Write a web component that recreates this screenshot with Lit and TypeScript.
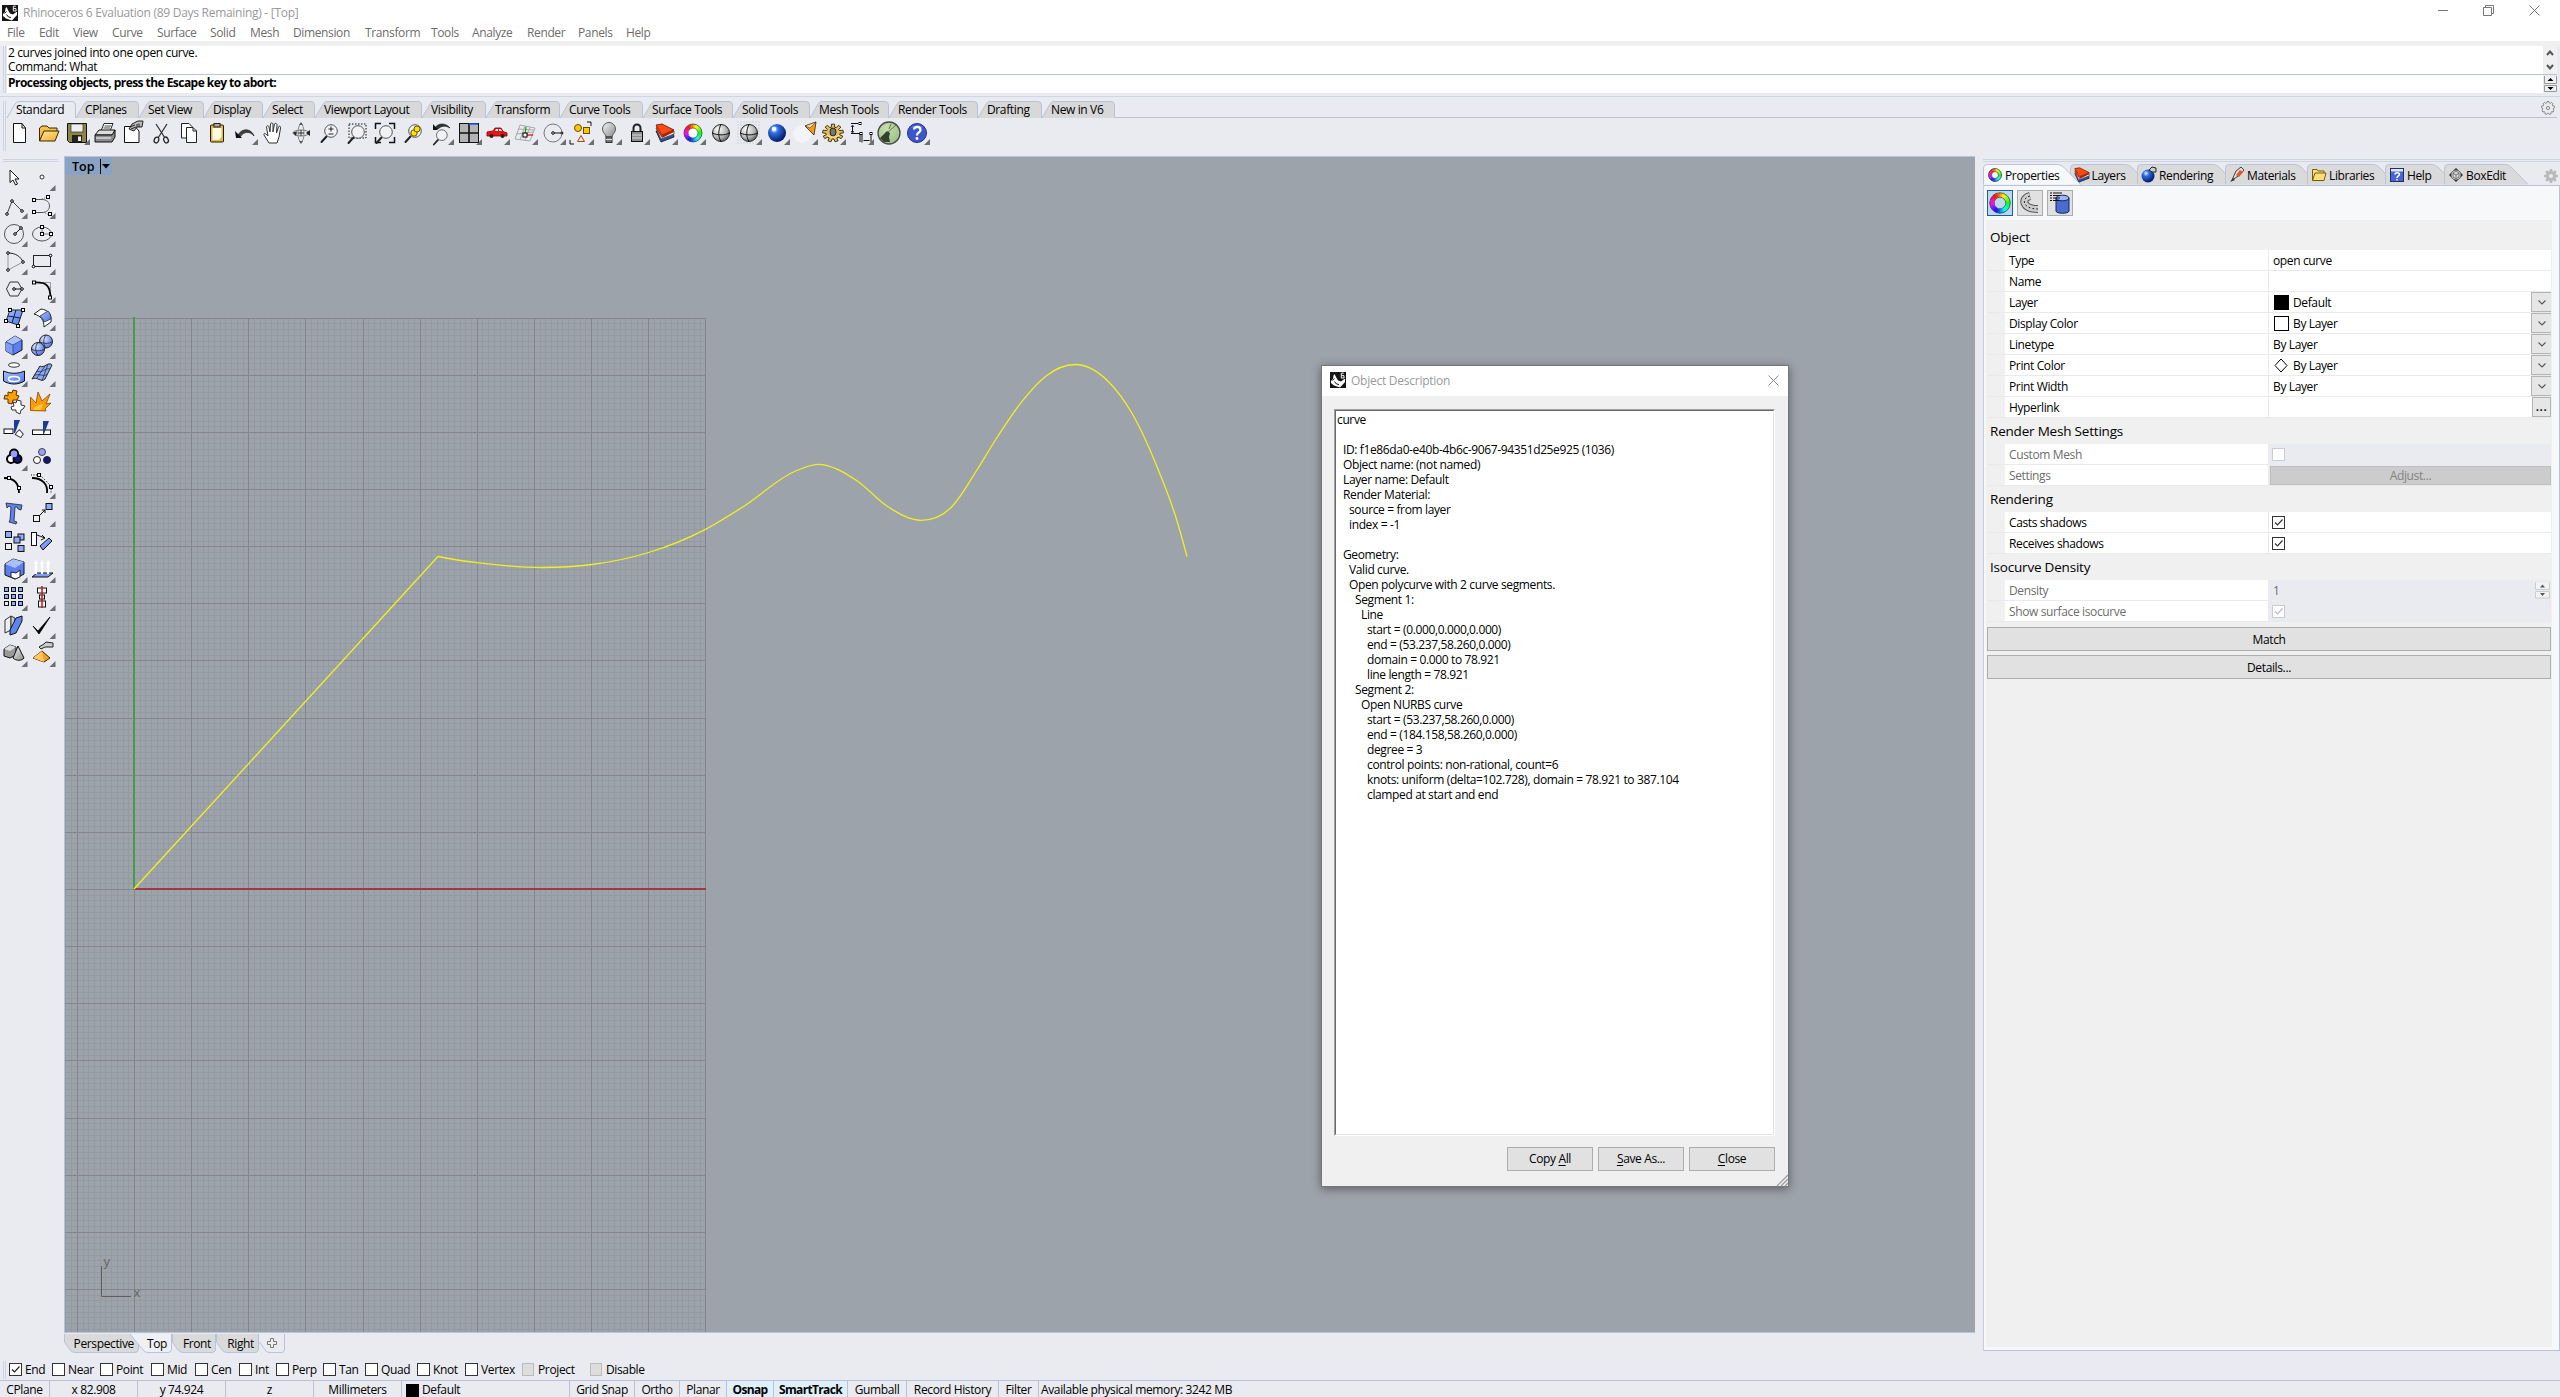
import { LitElement, html, svg, css, nothing } from "lit";
import { customElement, property } from "lit/decorators.js";

/* ---------- shared pieces ---------- */

const base = css`
  :host, :host * { box-sizing: border-box; }
  :host {
    font-family: "Open Sans", "Noto Sans", sans-serif;
    font-size: 12px;
    letter-spacing: -0.37px;
    color: #000;
    white-space: nowrap;
    cursor: default;
  }
  svg { display: block; overflow: visible; flex: none; }
`;

const polar = (r: number, deg: number) => {
  const a = (deg * Math.PI) / 180;
  return `${(r * Math.sin(a)).toFixed(2)} ${(-r * Math.cos(a)).toFixed(2)}`;
};

/** Hue ring centred on the origin. */
const wheel = (r: number, thick: number) => svg`
  ${Array.from({ length: 24 }, (_, i) => svg`<path d="M${polar(r, i * 15 - 1)}A${r} ${r} 0 0 1 ${polar(r, i * 15 + 16)}"
    fill="none" stroke="hsl(${(i * 15 + 40) % 360},100%,52%)" stroke-width=${thick}/>`)}
  <circle r=${r + thick / 2} fill="none" stroke="#444" stroke-width=".8"/>
  <circle r=${r - thick / 2} fill="none" stroke="#555" stroke-width=".8"/>`;

const gearPath = (n: number, ro: number, ri: number) => {
  let d = "";
  for (let i = 0; i < n; i++) {
    const a = (360 / n) * i, s = 360 / n;
    d += `${i ? "L" : "M"}${polar(ri, a - s * 0.34)}L${polar(ro, a - s * 0.22)}L${polar(ro, a + s * 0.22)}L${polar(ri, a + s * 0.34)}`;
  }
  return d + "z";
};

const defs = svg`<defs>
  <linearGradient id="blue" x1="0" y1="0" x2="1" y2="1"><stop offset="0" stop-color="#a9c2ff"/><stop offset="1" stop-color="#4a72ee"/></linearGradient>
  <linearGradient id="gold" x1="0" y1="0" x2="1" y2="1"><stop offset="0" stop-color="#ffe9a0"/><stop offset="1" stop-color="#f0ac20"/></linearGradient>
  <linearGradient id="grey" x1="0" y1="0" x2="1" y2="1"><stop offset="0" stop-color="#f4f4f4"/><stop offset="1" stop-color="#8a8a8a"/></linearGradient>
  <radialGradient id="ball" cx=".35" cy=".3" r=".8"><stop offset="0" stop-color="#fff"/><stop offset=".6" stop-color="#b4b4b4"/><stop offset="1" stop-color="#4c4c4c"/></radialGradient>
  <radialGradient id="bball" cx=".35" cy=".3" r=".75"><stop offset="0" stop-color="#e8f4ff"/><stop offset=".3" stop-color="#2f6fe0"/><stop offset="1" stop-color="#00105c"/></radialGradient>
  <radialGradient id="lball" cx=".35" cy=".3" r=".8"><stop offset="0" stop-color="#dfe8ff"/><stop offset="1" stop-color="#3e68e6"/></radialGradient>
  <radialGradient id="green" cx=".4" cy=".3" r=".8"><stop offset="0" stop-color="#c6e0ae"/><stop offset="1" stop-color="#96bd80"/></radialGradient>
</defs>`;

const sq = (x: number, y: number, s = 3) => svg`<rect x=${x - s / 2} y=${y - s / 2} width=${s} height=${s} fill="#fff" stroke="#000"/>`;
const dot = (x: number, y: number, r = 1.3) => svg`<circle cx=${x} cy=${y} r=${r} fill="#fff" stroke="#000"/>`;
const lens = (dx = 0, dy = 0) => svg`<g transform="translate(${dx} ${dy})">
  <path d="M-3.5 4.500L-8.500 10" stroke="#222" stroke-width="2" stroke-linecap="round"/>
  <circle cx="1" cy="-1" r="6.300" fill="#f4f4f6" fill-opacity=".8" stroke="#555"/></g>`;

const logo = svg`<rect width="16" height="16" fill="#161616"/>
  <path d="M1 9L3 7L3.5 3.5L4.5 2L6.5 6L8 8.5L11 9.5L15 6.5V10L10 15.5L4 13.5L1 11z" fill="#fff"/>
  <path d="M4.5 9.5L6.5 12L9 12.5M2.5 8.5l2-2" stroke="#161616" fill="none"/>
  <path d="M13.8 1.2H11.3V6H14V3.6H11.3" stroke="#eee" fill="none"/>`;

/* ---------- icon drawings, all centred on the origin ---------- */

const art: Record<string, unknown> = {
  new: svg`<path d="M-7.5-9.5H1L4.5-5V9.5H-7.5z" fill="#fdfdfd" stroke="#111"/><path d="M1-9.5V-5H4.5" fill="none" stroke="#111"/>`,
  open: svg`<path d="M-9.5 8V-5L-7-7H-2L0-5H8V-1H-5z" fill="#f2c14a" stroke="#3c2800"/><path d="M-9.5 8L-5-2H10L6 8z" fill="url(#gold)" stroke="#3c2800"/>`,
  save: svg`<path d="M-9.5-9.5H9.5V9.5H-7.5L-9.5 7.5z" fill="#8c8646" stroke="#111"/><rect x="-6" y="-9" width="12" height="8" fill="#eee" stroke="#333" stroke-width=".7"/>
    <rect x="-5" y="2" width="10" height="7" fill="#222"/><rect x="1" y="3.5" width="3" height="4.5" fill="#eee"/>`,
  print: svg`<path d="M-4-2L-1-9.5H8L5-2" fill="#fff" stroke="#222"/><path d="M-.5-7H6M-1.5-5H5" stroke="#444"/><path d="M-10 2L-6-3H10L8 2z" fill="#ddd" stroke="#111"/>
    <path d="M-10 2H7L10-3V4L7 9H-10z" fill="#8c8c8c" stroke="#111"/><path d="M-9 5H6" stroke="#fff"/>`,
  props: svg`<path d="M-8.5-6.5H2L6-2V9.500H-8.5z" fill="#fdfdfd" stroke="#111"/><path d="M-4-4L-1-9L5-12H10L9-6L4-6L1-2z" fill="#bbb" stroke="#222"/><path d="M-3-6L2-8M-2-4L3-6M4-9V-6M6-9.500V-6" stroke="#222"/>`,
  cut: svg`<path d="M-5-9L4 5M6-9L-3 5" stroke="#333" stroke-width="1.3"/><ellipse cx="-4.500" cy="7" rx="2.200" ry="3" fill="none" stroke="#222" stroke-width="1.300" transform="rotate(25 -4.500 7)"/><ellipse cx="5" cy="7" rx="2.200" ry="3" fill="none" stroke="#222" stroke-width="1.300" transform="rotate(-25 5 7)"/>`,
  copy: svg`<path d="M-7.500-9.500H0L3-6.500V5H-7.500z" fill="#fdfdfd" stroke="#222"/><path d="M-2.500-5.500H4L7.500-2V9.500H-2.500z" fill="#fdfdfd" stroke="#222"/><path d="M4-5.500V-2H7.500" fill="none" stroke="#222"/>`,
  paste: svg`<rect x="-6.500" y="-8" width="13" height="17" rx="1" fill="#e5b93a" stroke="#221a00"/><path d="M-4.500-5H4.500V4L2 7H-4.500z" fill="#fffce0"/><rect x="-3" y="-9.500" width="6" height="3.500" fill="#aaa" stroke="#222"/>`,
  undo: svg`<path d="M-7 2C-3-5 6-5 9 3C5-2-1-2-5 4" fill="#444" stroke="#222" stroke-width=".8"/><path d="M-10-2L-9 5H-3z" fill="#111"/>`,
  hand: svg`<path d="M-4 10L-9 2C-9.500 0-8 0-6 2L-5 3L-6.500-6C-6-8-4.500-7.500-4-6L-3-1L-2.500-9C-2-10.500-.5-10.500 0-9V-1L1.500-9C2-10 3.500-10 4-8.500L3.500 0L5.500-6C6-7.500 8-7 7.500-5L6 4L4 10z" fill="#fff" stroke="#333"/>`,
  spin: svg`<ellipse rx="8" ry="3" fill="none" stroke="#777"/><ellipse rx="3" ry="9" fill="none" stroke="#888"/><path d="M-5 3l-3-3.500l4-1zM5 0l4-3v6z" fill="#222"/><path d="M0-11l2 3h-4zM0 11l2-3h-4z" fill="#555"/><path d="M-3 0H3M0-3V3" stroke="#333"/>`,
  zoomdyn: svg`${lens(1, -1)}<path d="M-.500-4H4.500M2-6.500V-1.500M-.500 1H4.500" stroke="#222"/>`,
  zoomwin: svg`<path d="M-8-9H9V5H-8z" fill="none" stroke="#111" stroke-dasharray="1.500 1.500"/>${lens(0, 0)}`,
  extents: svg`<path d="M-9.500-4V-9.500H-4M4-9.500H9.500V-4M9.500 4V9.500H4M-9.500 4V9.500H-4" fill="none" stroke="#111" stroke-width="1.500"/>${lens(0, 0)}`,
  zoomsel: svg`${lens(1, -1)}<circle cx="1" cy="0" r="3.200" fill="#ffe000" stroke="#665500"/><circle cx="4" cy="-4" r="3" fill="#ffe000" stroke="#665500"/>`,
  undoview: svg`<g transform="translate(0 3) scale(.85)">${lens(0, 0)}</g><path d="M-7-4C-3-11 5-10 9-5C4-8 0-7-3-4" fill="#333" stroke="#222" stroke-width=".7"/><path d="M-8-9V-3H-3z" fill="#111"/>`,
  views: svg`<rect x="-9.500" y="-9.500" width="19" height="19" fill="#b4b4b4" stroke="#111"/><path d="M0-9.500V9.500M-9.500 0H9.500" stroke="#111" stroke-width="1.600"/><path d="M0-9H9" stroke="#1b58ff" stroke-width="1.500"/>`,
  car: svg`<path d="M-10 3V-1L-4-2L-2-5H4L6-1.500L10 0V3z" fill="#ee1111" stroke="#7a0000" stroke-width=".8"/><path d="M-2-2L-1-4H1V-2zM2-4H3.500L5-2H2z" fill="#fff"/><circle cx="-5.500" cy="3" r="2" fill="#222"/><circle cx="5.500" cy="3" r="2" fill="#222"/>`,
  cplane: svg`<path d="M-10 6L-5-8L10-5L5 8zM-8.500 1L8-1M-7-4L9-3M-5 7L0-7M0 7L5-6" fill="none" stroke="#aaa"/><path d="M0 2H8" stroke="#d00" stroke-width="1.200"/><path d="M0 2L1-6" stroke="#0a0" stroke-width="1.200"/>${sq(0, 2, 4)}`,
  circ: svg`<circle r="9" fill="none" stroke="#777"/><path d="M0 0H8" stroke="#111"/>${dot(0, 0)}${dot(9, 0, 1)}`,
  select: svg`<path d="M6-11H10V-7M-11 7V11H-7" fill="none" stroke="#111"/><circle cx="-3" cy="-5" r="3.500" fill="#ffc800" stroke="#6a4c00"/><rect x="2.500" y="-5.500" width="6" height="6" fill="#ffc800" stroke="#6a4c00"/><path d="M0 2.500L3.500 8.500H-3.500z" fill="#ffe0d0" stroke="#a04a20"/>`,
  bulb: svg`<path d="M-3 4C-3 1-6.500 0-6.500-4A6.500 6.500 0 0 1 6.500-4C6.500 0 3 1 3 4z" fill="url(#grey)" stroke="#555"/><rect x="-3" y="4" width="6" height="5.500" fill="#777" stroke="#333"/><path d="M-3 6.500H3" stroke="#ddd"/>`,
  lock: svg`<path d="M-3.500-1V-5A3.500 3.500 0 0 1 3.500-5V-1" fill="none" stroke="#222" stroke-width="2"/><rect x="-5.500" y="-1.500" width="11" height="10" fill="#8e8e8e" stroke="#111"/><path d="M-5 2H5M-5 5H5" stroke="#ddd"/>`,
  layers: svg`<path d="M-9-2L-4 9L9 4L8-2z" fill="#2a50b8" stroke="#111" stroke-width=".8"/><path d="M-9-5L-4 6L9 1V-2z" fill="#fff" stroke="#444" stroke-width=".8"/><path d="M-9-8L-3 2L9-3L-3-9z" fill="#ff4a12" stroke="#551100" stroke-width=".8"/><path d="M-9-8V-4L-3 5V2z" fill="#c83408"/><path d="M-3 2L9-3V-1L-3 5z" fill="#a82400"/>`,
  color: svg`<circle r="6" fill="#fff"/>${wheel(7, 4)}`,
  ball: svg`<circle r="8.500" fill="url(#ball)" stroke="#222"/><path d="M-8.500 0C-4 2.500 4 2.500 8.500 0M0-8.500C-3-3-3 4 0 8.500" fill="none" stroke="#111"/>`,
  ball2: svg`<path d="M-11.500-11H12M-11.500-8H12M-11.500-5H12M-11.500-2H12M-11.500 1H12M-11.500 4H12M-11.500 7H12M-11.500 10H12" stroke="#bbb" stroke-dasharray="1 2"/><circle r="8.500" fill="url(#ball)" stroke="#222"/><path d="M-8.500 0C-4 2.500 4 2.500 8.500 0M0-8.500C-3-3-3 4 0 8.500" fill="none" stroke="#111"/>`,
  bball: svg`<circle r="9" fill="url(#bball)"/><circle cx="-3" cy="-4" r="2.200" fill="#fff" opacity=".9"/>`,
  cone: svg`<circle cx="-3" cy="1" r="9" fill="#fff" opacity=".45"/><path d="M0-7L11-11L9 2z" fill="#ff9a10" stroke="#222" stroke-width=".8"/><path d="M0-7L11-11L5-5z" fill="#ffe0a0" stroke="#222" stroke-width=".5"/>`,
  gear: svg`<path d=${gearPath(9, 10.5, 7)} fill="#e7bd5c" stroke="#33260a" transform="scale(1 .85)"/><ellipse rx="3" ry="4" cy="-1" fill="#777" stroke="#222"/><path d="M-6 2C-3 5 3 5 6 2" stroke="#fff4c0" fill="none"/>`,
  dim: svg`<path d="M-10-9.500H-3M-8.500-7V-1M-10 .500H-1V9M1 1.500V9.500M10 2V9.500M2.500 7.500H8.500" fill="none" stroke="#111"/><path d="M-10-6l1.500-2l1.500 2M-10-2l1.500 2l1.500-2" fill="none" stroke="#111" stroke-width=".8"/>${sq(-1, -9.500, 2)}${sq(0, .500, 2)}${sq(10, .500, 2)}`,
  green: svg`<circle r="11" fill="url(#green)" stroke="#4a4a4a" stroke-width="1.300"/><path d="M-9 5L-4 0L-2-2L1 0L0 4L1 9L-5 9z" fill="#33402c"/><path d="M-2 0L8-9M0-4L2-9" stroke="#4a5a40" stroke-width=".8"/>`,
  help: svg`<circle r="9.500" fill="#3c56cc" stroke="#23307c"/><path d="M-6-6A9 6 0 0 1 6-6A9 7 0 0 1-6-6" fill="#8fa4f0" opacity=".6"/><path d="M-3-3.500C-3-7 3.500-7 3.500-3C3.500-.500 0-.500 0 2.500" fill="none" stroke="#fff" stroke-width="2.200"/><circle cy="5.500" r="1.400" fill="#fff"/>`,

  pointer: svg`<path d="M-4-7V5.500L-1 3L1.500 8L3.500 7L1 2H5z" fill="#fff" stroke="#111"/>`,
  point: svg`<circle r="2" fill="#fff" stroke="#333"/>`,
  pline: svg`<path d="M-7 9L-2-4L8 6" fill="none" stroke="#444"/>${dot(-7, 9)}${dot(-2, -4)}${dot(8, 6)}`,
  curve: svg`<path d="M-8-5H0C10-5 10 8 0 8H-8" fill="none" stroke="#555" transform="translate(0 -.500)"/><path d="M0-6L6-8M3 8L8 10" stroke="#777" stroke-dasharray="1 1"/>${sq(-8, -5)}${sq(6, -8)}${sq(-8, 7)}${sq(8, 9)}`,
  circle: svg`<circle r="9.500" cy="1" fill="none" stroke="#555"/><path d="M1 1L7-5" stroke="#111"/>${dot(1, 1)}${dot(7, -5)}`,
  ellipse: svg`<ellipse rx="9.500" ry="7" cy="1" fill="none" stroke="#555"/><path d="M0 1V-6M0 1H9" stroke="#777"/>${sq(0, -6)}${sq(0, 1)}${sq(9, 1)}`,
  arc: svg`<path d="M-6-8V9L9 1" fill="none" stroke="#999"/><path d="M-6-8C2-8 7-4 9 1" fill="none" stroke="#222"/>${dot(-6, -8)}${dot(-6, 9)}${dot(9, 1)}`,
  rect: svg`<rect x="-8.500" y="-5.500" width="17" height="11" fill="none" stroke="#222"/>${dot(8.500, -5.500)}${dot(-8.500, 5.500)}`,
  polygon: svg`<path d="M-7.500 0L-4-7H4L8 0L4 7H-4z" fill="none" stroke="#333"/><path d="M0 0H8" stroke="#111"/>${dot(0, 0)}${dot(8, 0)}`,
  fillet: svg`<path d="M0-6.500H8.500V3" fill="none" stroke="#999"/><path d="M-8-6.500C4-7 8-4 8.500 8" fill="none" stroke="#000" stroke-width="1.800"/>${sq(-8, -6.500)}${sq(8, 8.500)}`,
  surfpts: svg`<path d="M-4-7H9L4 8L-8 4z" fill="url(#blue)" stroke="#222"/><path d="M-6-1L6 1M2-7L-2 6" stroke="#123"/>${sq(-4, -7)}${sq(9, -7)}${sq(-8, 4)}${sq(4, 9)}`,
  sweep: svg`<path d="M-8-3L-1-8C7-7 10-2 9 5L2 10C2 3-1-1-8-3z" fill="#fff" stroke="#222"/><path d="M-2-1L6-6C8-4 9-1 9 2L2 5C1 2 0 0-2-1z" fill="url(#blue)" stroke="#222" stroke-width=".7"/>`,
  box: svg`<path d="M-8-3L1-9L8-5V5L-1 10L-8 6z" fill="#5b80f2" stroke="#111"/><path d="M-8-3L1-9L8-5L-1 0z" fill="#a9c0ff"/><path d="M-8-3L-1 0V10L-8 6z" fill="#7f9df8"/><path d="M-8-3L-1 0L8-5M-1 0V10" fill="none" stroke="#2a3b80" stroke-width=".7"/>`,
  spheres: svg`<circle cx="4" cy="-3.500" r="6.500" fill="url(#lball)" stroke="#222"/><path d="M-2.500-3.500C1-1 7-1 10.500-3.500M4-10C1-6 1-1 4 3" fill="none" stroke="#222" stroke-width=".8"/><circle cx="-4" cy="4" r="6.500" fill="url(#lball)" stroke="#222"/><path d="M-10.500 4C-7 6.500-1 6.500 2.500 4M-4-2.500C-7 1-7 6-4 10.500" fill="none" stroke="#222" stroke-width=".8"/>`,
  project: svg`<ellipse cy="-8" rx="5.500" ry="2.200" fill="#fff" stroke="#333"/><path d="M-10.500-2C-4 1 4 1 10.500-2V8C4 12-4 12-10.500 8z" fill="url(#blue)" stroke="#111"/><ellipse cy="6" rx="5.500" ry="2.500" fill="none" stroke="#fff" stroke-width="1.600"/>`,
  mesh: svg`<path d="M-2-7C2-4 6-12 10-8L3 6C-1 10-5 3-10 6z" fill="#8ea8fa" stroke="#222"/><path d="M-5-2C0 1 4-6 8-4M-8 3C-3-1 1 5 5 1M3-7L-5 5M6-9L0 8" fill="none" stroke="#234" stroke-width=".8"/>`,
  join: svg`<path d="M-9-6l3 1l0-4l4 1l1-3l4 1l-1 4l3 1l-2 4l-4 0l-1 4l-4-1l0-4l-4 0z" fill="#ffa200" stroke="#5a3200"/><path d="M-1 1l3 1l1-3l4 1l0 4l4 1l-2 3l-2 1l-1 4l-4-2l0-2l-4 0l-1-3l3-1z" fill="#fff" stroke="#333"/>`,
  explode: svg`<path d="M-11.500 9.500V-4L-6 2L-4-9L0 0L8-7L4 3L9 2L3 8L4 10z" fill="#ff9c08" stroke="#8a4400" stroke-width=".8"/><path d="M-9 9L-6 5L1 3L-1 9z" fill="#ffc830"/>`,
  trim: svg`<rect x="-10" y="0" width="9" height="4.500" fill="#fff" stroke="#111"/><path d="M0-9H6L1 4H0z" fill="#1c3c96"/><path d="M3 3L6 1L9 6L6 9L1 5z" fill="#fff" stroke="#444" transform="rotate(-10 4 4)"/>`,
  split: svg`<rect x="-9.500" y="1" width="18" height="4.500" fill="#fff" stroke="#111"/><path d="M1-8H7L2 5H1z" fill="#1c3c96"/>`,
  group: svg`<circle cy="-3.500" r="4" fill="#98a0ff" stroke="#000" stroke-width="2"/><circle cx="-3" cy="2" r="4" fill="#fff" stroke="#000" stroke-width="2"/><circle cx="3.500" cy="2" r="4" fill="#14147c" stroke="#000" stroke-width="2"/><circle cy="-3" r="3.300" fill="#98a0ff"/>`,
  ungroup: svg`<circle cy="-5" r="3.500" fill="#98a0ff" stroke="#444"/><circle cx="-5" cy="3" r="3.500" fill="#fff" stroke="#222"/><circle cx="5" cy="3" r="3.500" fill="#14147c" stroke="#222"/>`,
  ptson: svg`<path d="M-10-7C0-7 5-2 5 8" fill="none" stroke="#000" stroke-width="1.800"/>${sq(-5, -7)}${sq(5, 3)}`,
  ptson2: svg`<path d="M-10-7C0-7 6-1 5 8" fill="none" stroke="#000" stroke-width="1.800"/><path d="M-11-10H-2L9 1V9" fill="none" stroke="#000" stroke-dasharray="1 1.500"/>${sq(-3, -10)}${sq(9, 2)}`,
  text: svg`<path d="M-8-10L8-8L7-3L4-4L3-6H1L0 8L3 9L2 11L-5 9L-4 7L-3-6L-5-7L-7-5z" fill="#5d83f5" stroke="#222" stroke-width=".8"/>`,
  scale: svg`<rect x="-8.500" y="2.500" width="6" height="6" fill="#eee" stroke="#111"/><rect x="4" y="-9.500" width="6" height="6" fill="#8fa9fb" stroke="#111"/><path d="M-2 2L3-3M0-3H3V0" fill="none" stroke="#111"/>`,
  array: svg`<g stroke="#111"><rect x="-8.500" y="-9.500" width="6" height="6" fill="#8fa9fb"/><rect x="4" y="-7" width="6" height="6" fill="#8fa9fb"/><rect x="0" y="-4" width="6" height="6" fill="#8fa9fb"/><rect x="-8.500" y="2.500" width="6" height="6" fill="#eee"/><rect x="4" y="4.500" width="6" height="6" fill="#8fa9fb"/></g>`,
  orient: svg`<rect x="-10.500" y="-8.500" width="5" height="13" fill="#fff" stroke="#111"/><path d="M-5-6L3-3M0-6L3-3L-1-1" fill="none" stroke="#111"/><path d="M-2 5L7-3L10 0L1 9z" fill="url(#blue)" stroke="#111"/>`,
  solid: svg`<path d="M-9-5L-1-10L10-7V5L1 10L-9 6z" fill="#5b80f2" stroke="#111"/><path d="M-9-5L-1-10L10-7L1-1z" fill="#a9c0ff"/><path d="M-3 3L2 4L6 1V8L1 10L-3 8z" fill="#fff" stroke="#222"/>`,
  extrude: svg`<path d="M-10 8L-5 4H11L6 8z" fill="#7f9df8" stroke="#111"/><path d="M-6 5V-5M0 5V-5M6 5V-5" stroke="#fff" stroke-width="2.200"/><path d="M-8.500-5L-6-9L-3.500-5zM-2.500-5L0-9L2.500-5zM3.500-5L6-9L8.500-5z" fill="#fff"/>`,
  grid: svg`${[0, 1, 2].map((r) => [0, 1, 2].map((c) => svg`<rect x=${c * 7 - 9.5} y=${r * 7 - 9.5} width="4" height="4" fill=${r === 2 && c === 0 ? "#eee" : "#8fa9fb"} stroke="#111"/>`))}`,
  align: svg`<rect x="-4.500" y="-9" width="9" height="5" fill="#fff" stroke="#111"/><rect x="-2.500" y="-2" width="5" height="4" fill="#fff" stroke="#111"/><rect x="-3.500" y="4" width="7" height="6" fill="#fff" stroke="#111"/><path d="M0-11V11" stroke="#d01818" stroke-width="1.800" opacity=".85"/>`,
  flow: svg`<path d="M-9-5L-3-9V5L-9 8z" fill="#eee" stroke="#333"/><path d="M-3-9L1-7L0 6L-3 8z" fill="#ccc" stroke="#333"/><path d="M2-7L8-9L8-4L2 8L-4 10L-4 5z" fill="#5f83f3" stroke="#111"/>`,
  check: svg`<path d="M-9 1L-4 6L8-8L-3 9z" fill="#000" stroke="#000" stroke-width=".8"/>`,
  shapes: svg`<path d="M-10-4L-4-8L2-6V2L-4 5L-10 3z" fill="#999" stroke="#111"/><path d="M-10-4L-4-8L2-6L-4-2z" fill="#ddd"/><path d="M4-7L10 5C8 8 2 8-1 5z" fill="url(#grey)" stroke="#111"/>`,
  render: svg`<path d="M0-2L8 5L2 9L-9 5z" fill="#f0a020" stroke="#3c2800"/><path d="M0-2L2 9L-9 5z" fill="#ffc860"/><path d="M-3-6L2-9L4-11L11-10V-6L3-6L-1-4z" fill="#ccc" stroke="#222"/>`,
};

const TOOLS: [string, boolean][] = [
  ["new", false], ["open", false], ["save", true], ["print", false], ["props", false], ["cut", false], ["copy", false], ["paste", false],
  ["undo", true], ["hand", false], ["spin", false], ["zoomdyn", false], ["zoomwin", false], ["extents", false], ["zoomsel", false],
  ["undoview", true], ["views", true], ["car", true], ["cplane", true], ["circ", true], ["select", true], ["bulb", true], ["lock", true],
  ["layers", true], ["color", true], ["ball", false], ["ball2", true], ["bball", true], ["cone", true], ["gear", true], ["dim", true],
  ["green", false], ["help", true],
];

const SIDE: [string, boolean][] = [
  ["pointer", false], ["point", true], ["pline", true], ["curve", true], ["circle", true], ["ellipse", true], ["arc", true], ["rect", true],
  ["polygon", true], ["fillet", true], ["surfpts", true], ["sweep", true], ["box", true], ["spheres", true], ["project", true], ["mesh", true],
  ["join", false], ["explode", false], ["trim", false], ["split", false], ["group", true], ["ungroup", false], ["ptson", false], ["ptson2", true],
  ["text", false], ["scale", true], ["array", false], ["orient", false], ["solid", true], ["extrude", true], ["grid", true], ["align", true],
  ["flow", true], ["check", true], ["shapes", true], ["render", true],
];

const tool = ([name, fly]: [string, boolean], dx: number, dy: number) => html`
  <svg width="28" height="28" viewBox="-14 -14 28 28">${defs}${art[name]}
    ${fly ? svg`<path d="M${13 + dx} ${6 + dy}v6h-6z" fill="#6e6e6e"/>` : nothing}</svg>`;

/* ---------- viewport ---------- */

const OX = 134, OY = 889, UNIT = 5.713;

const CURVE: [number, number][] = [
  [438, 556.5], [479, 562.9], [543, 567.5], [592, 564.5], [648.6, 552.5], [705.5, 529.3], [744.3, 506], [793.5, 472], [818, 464.3],
  [857.3, 481], [886.8, 506], [921.2, 520.3], [950.6, 508], [977.6, 469], [994.8, 441], [1021.8, 401.7], [1046.4, 375.7], [1075, 364.5],
  [1107.8, 381], [1132.4, 414], [1157, 466.7], [1176.6, 519.5], [1187, 556.5],
];

/** Cubic path through points whose x always grows; slopes come from neighbouring chords. */
function smooth(p: [number, number][]): string {
  const n = p.length;
  const h = (i: number) => p[i + 1][0] - p[i][0];
  const c = (i: number) => (p[i + 1][1] - p[i][1]) / h(i);
  const m = p.map((_, i) => {
    if (i === 0) return 1.5 * c(0) - 0.5 * c(1);
    if (i === n - 1) return 1.15 * c(n - 2) - 0.15 * c(n - 3);
    return (c(i - 1) * h(i) + c(i) * h(i - 1)) / (h(i - 1) + h(i));
  });
  [2, 8, 11, 17].forEach((i) => (m[i] = 0));
  let d = `M${p[0]}`;
  for (let i = 0; i < n - 1; i++) {
    const t = h(i) / 3;
    d += `C${p[i][0] + t} ${p[i][1] + m[i] * t} ${p[i + 1][0] - t} ${p[i + 1][1] - m[i + 1] * t} ${p[i + 1]}`;
  }
  return d;
}

@customElement("rh-viewport")
class Viewport extends LitElement {
  static styles = [base, css`
    :host { display: block; position: relative; overflow: hidden; background: #9da3aa; border: 1px solid #b9c2dc; border-right: 0; }
    .scene { position: absolute; left: -65px; top: -157px; }
    .label { display: flex; align-items: center; width: 47px; height: 18px; background: #8ba3c3; position: relative; font-weight: 600; font-size: 12.500px; padding-left: 7px; letter-spacing: 0; }
    .label i { width: 1px; height: 15px; background: #000; margin-left: 6px; margin-right: 1px; }
    .axis { font: 13px "Open Sans", sans-serif; fill: #666; }
  `];
  render() {
    let minor = "", major = "";
    const right = Math.round(OX + 100 * UNIT), top = Math.round(OY - 100 * UNIT);
    for (let i = -13; i <= 100; i++) {
      const s = `M${Math.round(OX + i * UNIT) + 0.5} ${top}V1335`;
      if (i % 10) minor += s; else major += s;
    }
    for (let i = -78; i <= 100; i++) {
      const s = `M60 ${Math.round(OY - i * UNIT) + 0.5}H${right + 1}`;
      if (i % 10) minor += s; else major += s;
    }
    return html`
      <svg class="scene" width="1975" height="1340">
        <path d=${minor} stroke="#939aa2" fill="none"/>
        <path d=${major} stroke="#83868f" fill="none"/>
        <path d="M134 317V889" stroke="#4b9a4b" stroke-width="2"/>
        <path d="M134 889H706" stroke="#9b3a42" stroke-width="2"/>
        <path d="M134 889L438 556.500" stroke="#f0f020" stroke-width="1.300"/>
        <path d=${smooth(CURVE)} stroke="#f0f020" stroke-width="1.300" fill="none"/>
        <path d="M101.500 1266V1296.500H131" stroke="#5f5f5f" fill="none"/>
        <text class="axis" x="103.500" y="1266">y</text><text class="axis" x="133.500" y="1297">x</text>
      </svg>
      <div class="label">Top<i></i><svg width="8" height="5"><path d="M0 0H8L4 4.500z"/></svg></div>`;
  }
}

/* ---------- dialog ---------- */

const REPORT: [number, string][] = [
  [0, "curve"], [0, ""], [1, "ID: f1e86da0-e40b-4b6c-9067-94351d25e925 (1036)"], [1, "Object name: (not named)"], [1, "Layer name: Default"],
  [1, "Render Material:"], [2, "source = from layer"], [2, "index = -1"], [0, ""], [1, "Geometry:"], [2, "Valid curve."],
  [2, "Open polycurve with 2 curve segments."], [3, "Segment 1:"], [4, "Line"], [5, "start = (0.000,0.000,0.000)"],
  [5, "end = (53.237,58.260,0.000)"], [5, "domain = 0.000 to 78.921"], [5, "line length = 78.921"], [3, "Segment 2:"], [4, "Open NURBS curve"],
  [5, "start = (53.237,58.260,0.000)"], [5, "end = (184.158,58.260,0.000)"], [5, "degree = 3"], [5, "control points: non-rational, count=6"],
  [5, "knots: uniform (delta=102.728), domain = 78.921 to 387.104"], [5, "clamped at start and end"],
];

@customElement("rh-dialog")
class Dialog extends LitElement {
  static styles = [base, css`
    :host { display: flex; flex-direction: column; background: #f0f0f0; border: 1px solid #74787d; box-shadow: 0 2px 9px rgba(0,0,0,.42); }
    .title { height: 30px; background: #fff; display: flex; align-items: center; padding: 0 9px 2px 8px; gap: 5px; color: #999; letter-spacing: -.25px; }
    .title span { flex: 1; }
    .report { flex: 1; margin: 13px 13px 0 12px; background: #fff; border: 1px solid; border-color: #a0a0a0 #fff #fff #a0a0a0; }
    .inner { height: 100%; border: 1px solid; border-color: #696969 #e3e3e3 #e3e3e3 #696969; padding: 1px 1px; }
    .line { height: 15px; line-height: 15px; }
    .l1 { padding-left: 6px } .l2 { padding-left: 12px } .l3 { padding-left: 18px } .l4 { padding-left: 24px } .l5 { padding-left: 30px }
    .buttons { display: flex; justify-content: flex-end; gap: 5px; padding: 11px 13px 15px; }
    .btn { width: 86px; height: 24px; border: 1px solid #adadad; background: #e1e1e1; display: flex; align-items: center; justify-content: center; padding-bottom: 1px; }
    .grip { position: absolute; right: 0; bottom: 0; }
    u { text-underline-offset: 2px; }
  `];
  render() {
    return html`
      <div class="title"><svg width="16" height="16">${logo}</svg><span>Object Description</span>
        <svg width="11" height="11"><path d="M.5.5l10 10M10.500.500l-10 10" stroke="#8a8a8a"/></svg></div>
      <div class="report"><div class="inner">${REPORT.map(([l, t]) => html`<div class="line l${l}">${t}</div>`)}</div></div>
      <div class="buttons"><div class="btn"><span>Copy <u>A</u>ll</span></div><div class="btn"><span><u>S</u>ave As...</span></div><div class="btn"><span><u>C</u>lose</span></div></div>
      <svg class="grip" width="11" height="11"><path d="M0 11L11 0M4 11L11 4M8 11L11 8" stroke="#999" stroke-width="1.200"/></svg>`;
  }
}

/* ---------- properties panel ---------- */

const check = (on: boolean, off = false) => html`<svg width="13" height="13"><rect x=".5" y=".5" width="12" height="12" fill="#fff" stroke=${off ? "#ccc" : "#333"}/>
  ${on ? svg`<path d="M3 6.500L5.500 9L10.500 3.500" fill="none" stroke=${off ? "#bbb" : "#333"} stroke-width="1.200"/>` : nothing}</svg>`;

@customElement("rh-properties")
class Properties extends LitElement {
  static styles = [base, css`
    :host { display: flex; flex-direction: column; padding: 3px 0 2px 8px; }
    .rails { height: 3px; border-top: 1px solid #cdd3e4; border-bottom: 1px solid #cdd3e4; }
    .tabs { display: flex; height: 23px; padding-top: 2px; align-items: flex-end; }
    .tab { display: grid; margin-right: -11px; height: 21px; position: relative; }
    .tab.active { z-index: 1; }
    .tab > * { grid-area: 1 / 1; }
    .tab .in { display: flex; align-items: center; gap: 2px; padding: 1px 0 0 4px; }
    .cog { margin: 0 2px 2px auto; }
    .body { flex: 1; background: #f7f8fa; border: 1px solid #b9c2dc; border-left-color: #c6cbe8; padding: 4px 7px 3px 2px; display: flex; flex-direction: column; }
    .modes { display: flex; gap: 4px; height: 30px; padding-left: 1px; }
    .mode { width: 26px; height: 26px; border: 1px solid #adadad; background: #e1e1e1; display: grid; place-items: center; }
    .mode.on { border: 1px solid #1a5f9e; background: #bcd8f0; }
    .sheet { flex: 1; background: #f0f0f0; padding: 4px 1px 0 1px; }
    .head { height: 26px; padding: 4px 0 0 3px; font-size: 13.500px; letter-spacing: -.2px; }
    .row { display: grid; grid-template-columns: 18px 264px 1fr; height: 21px; }
    .row > div { border-bottom: 1px solid #e9e9ee; display: flex; align-items: center; }
    .name { background: #fff; padding-left: 4px; border-right: 1px solid #e9e9ee; }
    .val { background: #fff; padding-left: 4px; gap: 4px; }
    .off .name { color: #6d6d6d; }
    .off .val { background: #eaebf0; color: #6d6d6d; padding-left: 4px; }
    .val.chk, .off .val.chk { padding-left: 3px; }
    .val .txt { flex: 1; }
    .sw { width: 15px; height: 15px; border: 1px solid #000; background: #fff; margin-left: 1px; }
    .sw.solid { background: #000; }
    .drop { width: 20px; align-self: stretch; border: 1px solid #b4b4b4; background: #e6e6e6; border-right: 0; display: grid; place-items: center; }
    .dots { line-height: 8px; font-weight: 600; letter-spacing: .5px; width: 19px; border-right: 1px solid #b4b4b4; }
    .adjust { flex: 1; margin-left: -3px; align-self: stretch; background: #ccc; border: 1px solid #bfbfbf; display: grid; place-items: center; color: #838383; margin-top: 1px; }
    .big { height: 24px; border: 1px solid #adadad; background: #e1e1e1; display: grid; place-items: center; margin-top: 4px; }
    .big.first { margin-top: 5px; }
  `];
  static TABS: [string, number, unknown][] = [
    ["Properties", 86.5, svg`${wheel(5, 3)}`],
    ["Layers", 67.5, svg`<g transform="scale(.8)">${art.layers}</g>`],
    ["Rendering", 88, svg`<circle cx="-1" cy="1" r="6.500" fill="url(#bball)"/><path d="M0-5L3-8L7-7V-3L3-3z" fill="#ccc" stroke="#222"/>`],
    ["Materials", 82, svg`<path d="M-5 5L-1-4L4-8L7-5L3 0z" fill="#ddd" stroke="#444"/><path d="M-1 0L3-5L6-3L2 2z" fill="#e8552a"/><path d="M-7 7L-4 3L-2 5z" fill="#333"/>`],
    ["Libraries", 78, svg`<path d="M-6.500 5.500V-5.500H-2L-1-4H5V-2M-6.500 5.500L-4-2H7L5 5.500z" fill="#ffe07a" stroke="#7a5a08"/>`],
    ["Help", 59, svg`<rect x="-6.500" y="-6.500" width="13" height="13" fill="#4565d8" stroke="#222c66"/><path d="M-6-6H6V-3.500H-6z" fill="#dfe6ff"/><path d="M-2-.5C-2-3 2.500-3 2.500-.5C2.500 1 0 1 0 3M0 4V5.500" fill="none" stroke="#fff" stroke-width="1.500"/>`],
    ["BoxEdit", 73, svg`<circle r="5" fill="none" stroke="#555"/><path d="M-3-2L0-4L3-2V2L0 4L-3 2zM-3-2L0 0L3-2M0 0V4" fill="none" stroke="#777"/><path d="M-7 0l2-2v4zM7 0l-2-2v4zM0-7l2 2h-4zM0 7l2-2h-4z" fill="#333"/>`],
  ];
  row(name: string, val: unknown, cls = "", vcls = "") {
    return html`<div class="row ${cls}"><div></div><div class="name">${name}</div><div class="val ${vcls}">${val}</div></div>`;
  }
  drop() {
    return html`<div class="drop"><svg width="8" height="5"><path d="M.5.5L4 4L7.500.500" fill="none" stroke="#555" stroke-width="1.100"/></svg></div>`;
  }
  render() {
    const d = () => this.drop();
    return html`
      <div class="rails"></div>
      <div class="tabs">
        ${Properties.TABS.map(([t, w, icon], i) => html`<div class="tab ${i ? "" : "active"}">
          <svg width=${w + 11} height="21"><path d="M.5 20.500V4Q.5.5 4 .5H${w - 12}Q${w - 9} .5 ${w - 6} 3L${w + 11} 20.500" fill=${i ? "#dadada" : "#f7f8fa"} stroke="#bcc4dc"/></svg>
          <div class="in"><svg width="16" height="16" viewBox="-8 -8 16 16">${defs}${icon}</svg><span>${t}</span></div></div>`)}
        <svg class="cog" width="14" height="14" viewBox="-7 -7 14 14"><path d=${gearPath(8, 7, 5.2)} fill="#b9b9b9"/><circle r="2" fill="#eaebf0"/></svg>
      </div>
      <div class="body">
        <div class="modes">
          <div class="mode on"><svg width="24" height="24" viewBox="-12 -12 24 24">${wheel(8, 4.5)}</svg></div>
          <div class="mode"><svg width="24" height="24" viewBox="-12 -12 24 24"><path d="M0-7C-9-5-8 6 8 6" fill="none" stroke="#555" stroke-width="8"/><path d="M0-7C-9-5-8 6 8 6" fill="none" stroke="#ccc" stroke-width="6"/><path d="M0-7C-9-5-8 6 8 6" fill="none" stroke="#222" stroke-dasharray="2 2"/></svg></div>
          <div class="mode"><svg width="24" height="24" viewBox="-12 -12 24 24"><path d="M-4-5V8C-4 11 9 11 9 8V-5z" fill="#4a6cd0" stroke="#16245c"/><ellipse cx="2.500" cy="-5" rx="6.500" ry="2.800" fill="#9db6f8" stroke="#16245c"/><path d="M-10-10H2M-10-7.500H0M-10-5H0M-10-2.500H-1" stroke="#111" stroke-dasharray="2 1 9 1"/></svg></div>
        </div>
        <div class="sheet">
          <div class="head">Object</div>
          ${this.row("Type", html`<span class="txt">open curve</span>`)}
          ${this.row("Name", nothing)}
          ${this.row("Layer", html`<i class="sw solid"></i><span class="txt">Default</span>${d()}`)}
          ${this.row("Display Color", html`<i class="sw"></i><span class="txt">By Layer</span>${d()}`)}
          ${this.row("Linetype", html`<span class="txt">By Layer</span>${d()}`)}
          ${this.row("Print Color", html`<svg width="16" height="15"><path d="M8 1L14 7.500L8 14L2 7.500z" fill="#fff" stroke="#000"/></svg><span class="txt">By Layer</span>${d()}`)}
          ${this.row("Print Width", html`<span class="txt">By Layer</span>${d()}`)}
          ${this.row("Hyperlink", html`<span class="txt"></span><div class="drop dots">...</div>`)}
          <div class="head">Render Mesh Settings</div>
          ${this.row("Custom Mesh", check(false, true), "off", "chk")}
          ${this.row("Settings", html`<div class="adjust">Adjust...</div>`, "off")}
          <div class="head">Rendering</div>
          ${this.row("Casts shadows", check(true), "", "chk")}
          ${this.row("Receives shadows", check(true), "", "chk")}
          <div class="head">Isocurve Density</div>
          ${this.row("Density", html`<span class="txt">1</span><svg width="17" height="17"><path d="M1.500.500V7.500H15.500V.500M1.500 9.500V16H15.500V9.500z" fill="#f2f2f2" stroke="#ccc"/><path d="M6 5.500L8.500 2.500L11 5.500zM6 11L8.500 14L11 11z" fill="#555"/></svg>`, "off")}
          ${this.row("Show surface isocurve", check(true, true), "off", "chk")}
          <div class="big first">Match</div>
          <div class="big">Details...</div>
        </div>
      </div>`;
  }
}

/* ---------- application frame ---------- */

const MENU: [string, number][] = [
  ["File", 32], ["Edit", 34], ["View", 39], ["Curve", 45], ["Surface", 53], ["Solid", 40], ["Mesh", 43], ["Dimension", 72],
  ["Transform", 66], ["Tools", 41], ["Analyze", 55], ["Render", 51], ["Panels", 48], ["Help", 40],
];

const TABS: [string, number][] = [
  ["Standard", 69], ["CPlanes", 63], ["Set View", 65], ["Display", 59], ["Select", 52], ["Viewport Layout", 107], ["Visibility", 64],
  ["Transform", 74], ["Curve Tools", 83], ["Surface Tools", 90], ["Solid Tools", 77], ["Mesh Tools", 79], ["Render Tools", 89],
  ["Drafting", 64], ["New in V6", 73],
];

const OSNAPS: [string, number][] = [
  ["End", 43], ["Near", 48], ["Point", 51], ["Mid", 44], ["Cen", 44], ["Int", 37], ["Perp", 47], ["Tan", 42], ["Quad", 52], ["Knot", 48],
  ["Vertex", 57], ["Project", 68], ["Disable", 60],
];

const STATUS: [string, number, string][] = [
  ["CPlane", 50, ""], ["x 82.908", 88, ""], ["y 74.924", 88, ""], ["z", 88, ""], ["Millimeters", 88, ""], ["Default", 168, "layer"],
  ["Grid Snap", 65, ""], ["Ortho", 45, ""], ["Planar", 47, ""], ["Osnap", 47, "on"], ["SmartTrack", 74, "on"], ["Gumball", 59, ""],
  ["Record History", 92, ""], ["Filter", 40, ""],
];

const VTABS: [string, number][] = [["Perspective", 75], ["Top", 33], ["Front", 44], ["Right", 43]];

@customElement("app-root")
class AppRoot extends LitElement {
  @property() project = "Rhinoceros 6 Evaluation (89 Days Remaining) - [Top]";
  static styles = [base, css`
    :host { display: flex; flex-direction: column; width: 2560px; height: 1397px; overflow: hidden; background: #eaebf0; position: relative; }
    .title { height: 23px; background: #fff; display: flex; align-items: center; padding: 0 20px 0 2px; color: #999; letter-spacing: -.28px; }
    .title span { flex: 1; margin-left: 5px; padding-top: 1px; }
    .wbtns { display: flex; gap: 35px; align-items: center; margin-bottom: 2px; }
    .menu { height: 18px; background: #fff; display: flex; align-items: center; padding-left: 7px; color: #6d6d6d; }
    .menu div { padding-top: 1px; }
    .cmd { height: 56px; border-top: 5px solid #f0f0f0; border-bottom: 1px solid #cfd4e6; display: flex; padding: 0 3px 3px 3px; }
    .rail { width: 3px; border-left: 1px solid #cdd3e4; border-right: 1px solid #cdd3e4; margin-right: 1px; }
    .hist { flex: 1; background: #fff; }
    .hist div { height: 15px; line-height: 13px; padding-left: 1px; }
    .hist div:nth-child(2) { height: 13px; line-height: 12px; }
    .hist .prompt { height: 18px; line-height: 16px; border-top: 1px solid #b9c2dc; font-weight: 700; letter-spacing: -.55px; }
    .bar { display: flex; padding: 4px 3px 0 3px; height: 59px; }
    .bar .rail { height: 50px; }
    .col { flex: 1; display: flex; flex-direction: column; }
    .tabs { display: flex; height: 17px; border-bottom: 1px solid #b9c2dc; }
    .tab { display: grid; height: 17px; }
    .tab > * { grid-area: 1 / 1; }
    .tab span { padding-left: 9px; line-height: 17px; }
    .tabs .cog { margin: 0 2px 0 auto; }
    .tools { display: flex; padding-top: 1px; }
    .main { flex: 1; display: grid; grid-template-columns: 64px 1911px 1fr; min-height: 0; }
    .side { padding: 3px 0 0 0; }
    .side .top { height: 3px; margin: 0 6px 1px 3px; border-top: 1px solid #cdd3e4; border-bottom: 1px solid #cdd3e4; }
    .sgrid { display: grid; grid-template-columns: 28px 28px; }
    .center { display: flex; flex-direction: column; min-width: 0; }
    rh-viewport { height: 1177px; }
    .vtabs { display: flex; height: 20px; padding-top: 1px; }
    .vtab { display: grid; }
    .vtab > * { grid-area: 1 / 1; }
    .vtab span { text-align: right; padding-right: 5px; line-height: 19px; }
    .osnap { height: 21px; display: flex; padding: 0 0 0 3px; margin-top: 7px; align-items: center; }
    .osnap .rail { height: 18px; margin-right: 3px; }
    .os { display: flex; align-items: center; gap: 3px; }
    .status { height: 17px; border-top: 1px solid #b9c2dc; display: flex; }
    .st { height: 16px; line-height: 14px; padding-top: 2px; text-align: center; border-right: 1px solid #b9c2dc; }
    .st.on { background: #dff0fb; font-weight: 700; letter-spacing: -.65px; }
    .st.layer { text-align: left; display: flex; gap: 3px; padding-left: 4px; }
    .st.layer i { width: 13px; height: 13px; background: #000; margin-top: 1px; }
    .mem { line-height: 14px; padding: 2px 0 0 2px; }
    rh-dialog { position: absolute; left: 1321px; top: 365px; width: 468px; height: 822px; }
  `];
  render() {
    const w = (n: number) => `width:${n}px`;
    return html`
      <div class="title"><svg width="16" height="18"><g transform="translate(0 2)">${logo}</g></svg><span>${this.project}</span>
        <div class="wbtns"><svg width="10" height="11"><path d="M0 5.500H10" stroke="#777"/></svg>
          <svg width="11" height="11"><path d="M.5 2.500H8.500V10.500H.5zM2.500 2.500V.500H10.500V8.500H8.500" fill="none" stroke="#777"/></svg>
          <svg width="11" height="11"><path d="M.5.5l10 10M10.500.500l-10 10" stroke="#777"/></svg></div></div>
      <div class="menu">${MENU.map(([t, n]) => html`<div style=${w(n)}>${t}</div>`)}</div>
      <div class="cmd"><div class="rail"></div>
        <div class="hist"><div>2 curves joined into one open curve.</div><div>Command: What</div><div class="prompt">Processing objects, press the Escape key to abort:</div></div>
        <svg width="14" height="47"><rect width="14" height="28" fill="#f0f0f0"/><path d="M4 9L7 5.500L10 9M4 19L7 22.500L10 19" fill="none" stroke="#555" stroke-width="2"/>
          <path d="M0 28.500H14" stroke="#b9c2dc"/><path d="M1.500 30V37.500H13.500V30M1.500 39.500H13.500V45.500H1.500z" fill="#f0f0f0" stroke="#999"/><path d="M4.500 35L7.500 32L10.500 35zM4.500 41L7.500 44L10.500 41z"/></svg></div>
      <div class="bar"><div class="rail"></div><div class="col">
        <div class="tabs">${TABS.map(([t, n], i) => html`<div class="tab">
            <svg width=${n} height="17"><path d="M0 17L8 3Q9.500 .5 12 .5H${n - 4}Q${n - 0.5} .5 ${n - 0.5} 4V17" fill=${i ? "#d8d8d8" : "#eaebf0"} stroke="#b9c2dc"/></svg>
            <span>${t}</span></div>`)}
          <svg class="cog" width="14" height="14" viewBox="-7 -7 14 14"><path d=${gearPath(9, 6.5, 5.3)} fill="none" stroke="#888"/><circle r="1.600" fill="none" stroke="#888"/></svg></div>
        <div class="tools">${TOOLS.map((t) => tool(t, 0, 0))}</div></div></div>
      <div class="main">
        <div class="side"><div class="top"></div><div class="sgrid">${SIDE.map((t) => tool(t, 0.5, 2))}</div></div>
        <div class="center"><rh-viewport></rh-viewport>
          <div class="vtabs">${VTABS.map(([t, n]) => html`<div class="vtab" style=${w(n)}>
              <svg width=${n} height="19"><path d=${t === "Top" ? `M-9 0L4 16Q6 18.500 9 18.500H${n - 4}Q${n - 0.5} 18.500 ${n - 0.5} 15V0` : `M.5 0V8L6 16Q8 18.500 11 18.500H${n - 4}Q${n - 0.5} 18.500 ${n - 0.5} 15V0`}
                fill=${t === "Top" ? "#eff0f3" : "#dadada"} stroke="#b9c2dc"/></svg><span>${t}</span></div>`)}
            <svg width="26" height="19"><path d="M.5 8L6 16Q8 18.500 10 18.500H23Q25.500 18.500 25.500 15V0" fill="none" stroke="#b9c2dc"/><path d="M11.500 4.500h3v3h3v3h-3v3h-3v-3h-3v-3h3z" fill="#eee" stroke="#777"/></svg></div></div>
        <rh-properties></rh-properties>
      </div>
      <div class="osnap"><div class="rail"></div>${OSNAPS.map(([t, n]) => {
        const off = t === "Project" || t === "Disable";
        return html`<div class="os" style=${w(n)}><svg width="13" height="13"><rect x=".5" y=".5" width=${off ? 11 : 12} height="12" fill=${off ? "#ddd" : "#fff"} stroke=${off ? "#bbb" : "#333"}/>
          ${t === "End" ? svg`<path d="M3 6.500L5.500 9L10.500 3.500" fill="none" stroke="#222" stroke-width="1.200"/>` : nothing}</svg>${t}</div>`; })}</div>
      <div class="status">${STATUS.map(([t, n, c]) => html`<div class="st ${c}" style=${w(n)}>${c === "layer" ? html`<i></i>` : nothing}${t}</div>`)}<div class="mem">Available physical memory: 3242 MB</div></div>
      <rh-dialog></rh-dialog>`;
  }
}
